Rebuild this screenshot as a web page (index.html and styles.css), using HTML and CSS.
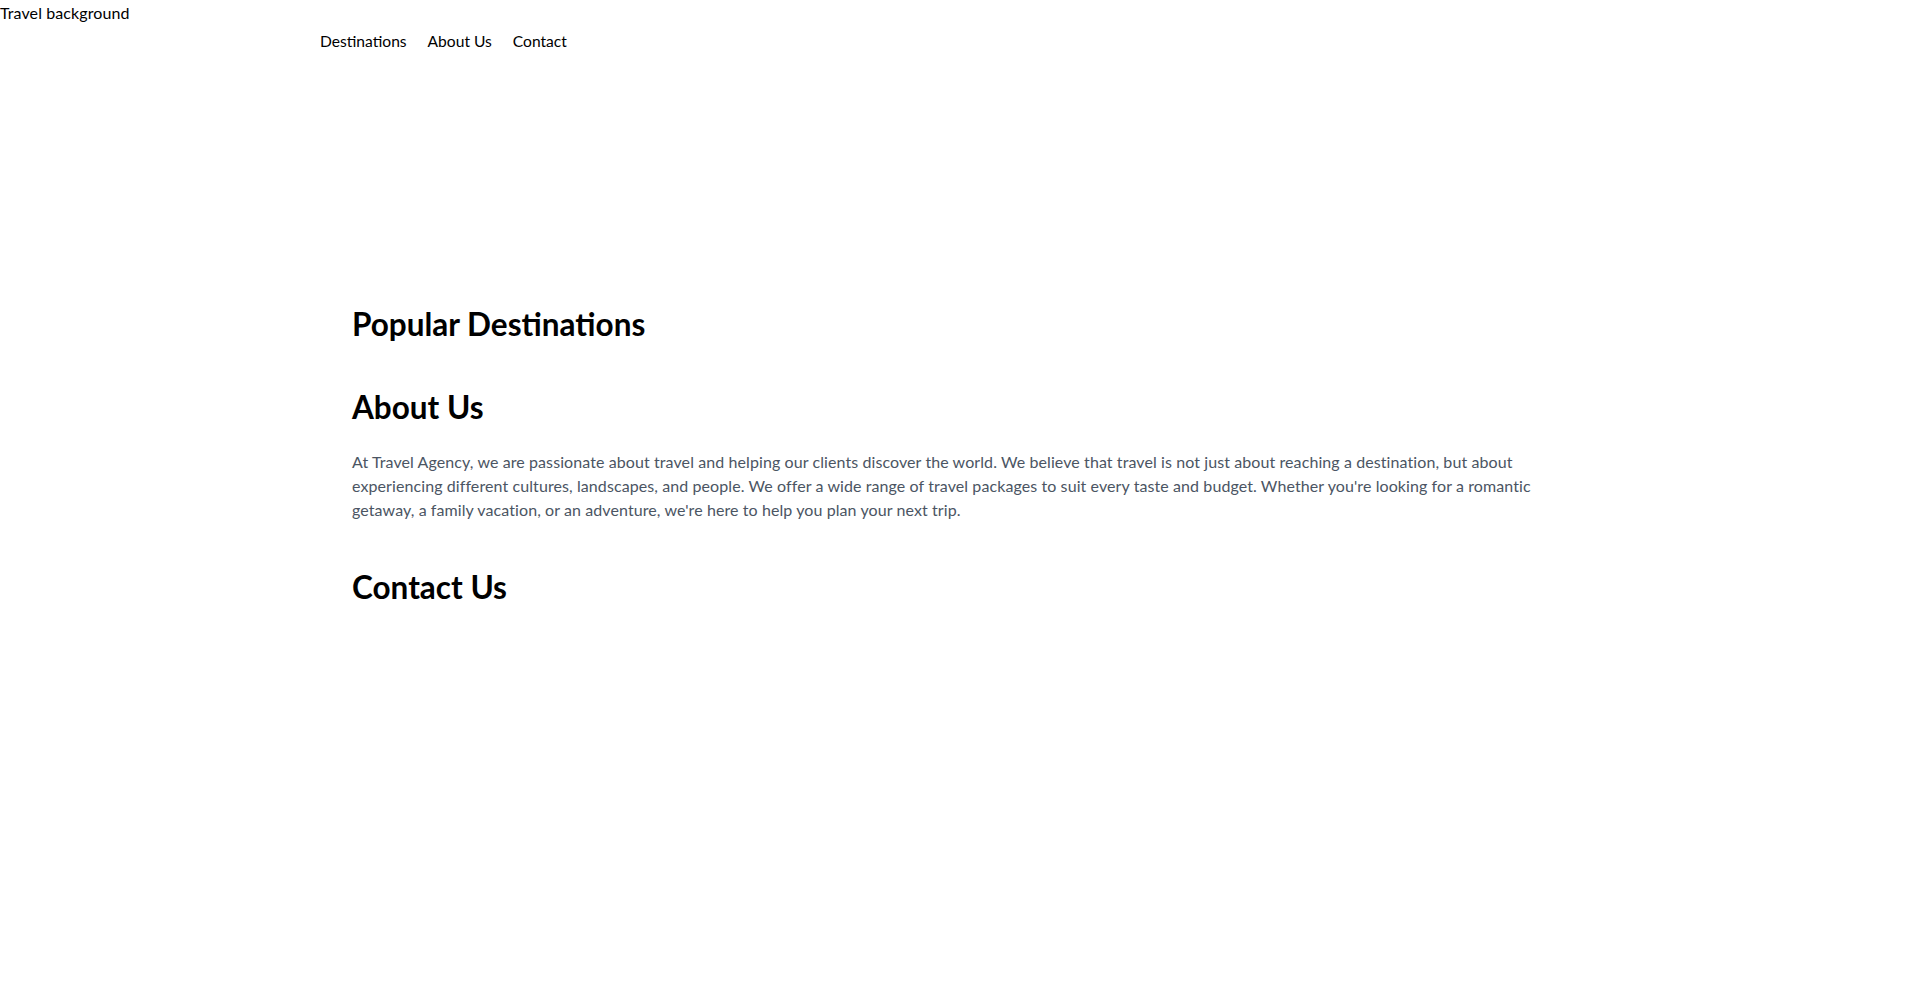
FILE: index.html
```html
<!DOCTYPE html>
<html lang="en">
<head>
<meta charset="utf-8">
<title>Travel Agency</title>
<link rel="stylesheet" href="styles.css">
</head>
<body>
<header class="hero">
  <div class="hero-bg">Travel background</div>
  <nav class="nav">
    <a class="nav-link" href="#destinations">Destinations</a>
    <a class="nav-link" href="#about">About Us</a>
    <a class="nav-link" href="#contact">Contact</a>
  </nav>
</header>
<main class="content">
  <section class="section" id="destinations">
    <h2 class="section-title">Popular Destinations</h2>
  </section>
  <section class="section section-about" id="about">
    <h2 class="section-title">About Us</h2>
    <p class="about-text">At Travel Agency, we are passionate about travel and helping our clients discover the world. We believe that travel is not just about reaching a destination, but about experiencing different cultures, landscapes, and people. We offer a wide range of travel packages to suit every taste and budget. Whether you're looking for a romantic getaway, a family vacation, or an adventure, we're here to help you plan your next trip.</p>
  </section>
  <section class="section section-contact" id="contact">
    <h2 class="section-title">Contact Us</h2>
  </section>
</main>
</body>
</html>
```
FILE: styles.css
```css
* { box-sizing: border-box; }
html, body { margin: 0; padding: 0; background: #ffffff; }
body {
  font-family: Lato, "Liberation Sans", sans-serif;
  font-size: 16px;
  line-height: 24px;
  color: #000000;
}
.hero {
  height: 258px;
}
.hero-bg {
  padding-top: 1px;
  line-height: 24px;
  letter-spacing: 0.1px;
  color: #000000;
}
.nav {
  max-width: 1280px;
  margin: 0 auto;
  padding-top: 4px;
  display: flex;
  gap: 21px;
}
.nav-link {
  color: #000000;
  text-decoration: none;
  font-size: 15.6px;
  line-height: 24px;
}
.content {
  max-width: 1280px;
  margin: 0 auto;
  padding: 48px 32px 0;
}
.section { margin: 0; }
.section-about { margin-top: 47px; }
.section-contact { margin-top: 47px; }
.section-title {
  margin: 0;
  font-size: 31.5px;
  line-height: 36px;
  font-weight: 700;
  color: #000000;
}
.about-text {
  margin: 25px 0 0;
  color: #4b5563;
  font-size: 16px;
  line-height: 24px;
  letter-spacing: 0.09px;
}
```
